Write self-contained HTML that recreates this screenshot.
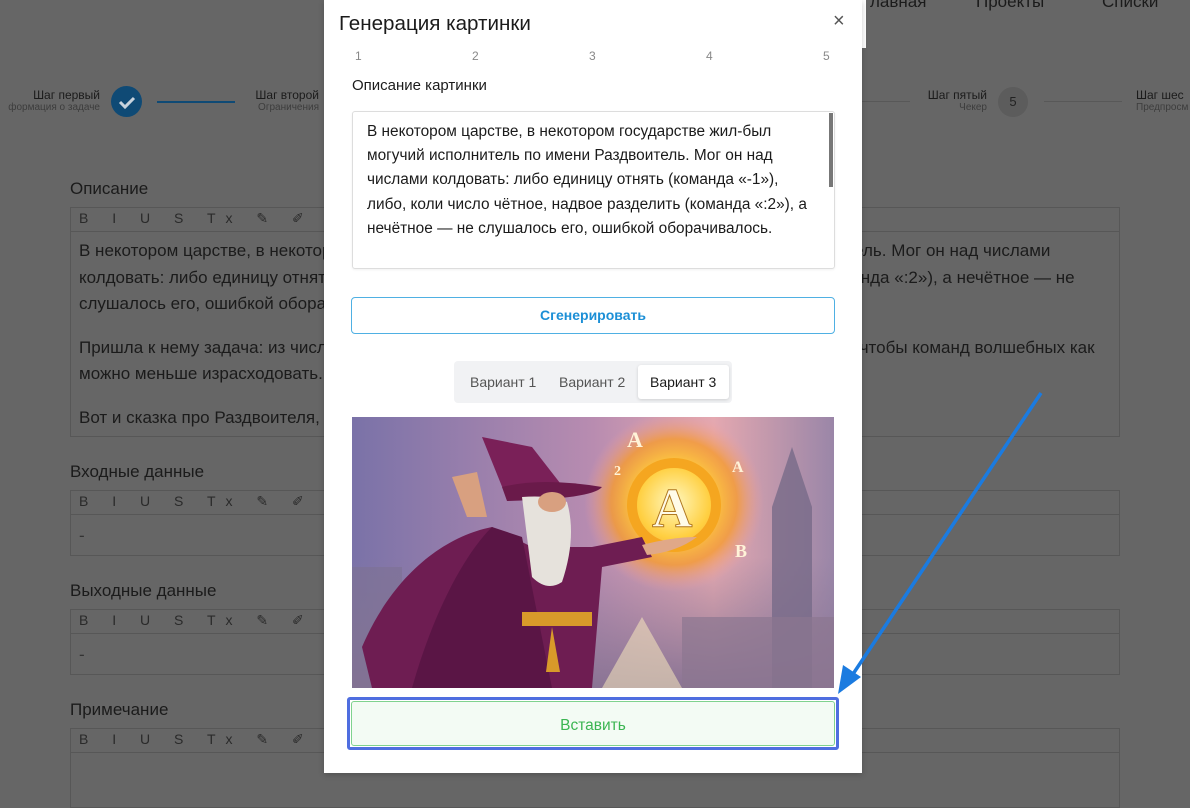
<!DOCTYPE html>
<html><head><meta charset="utf-8"><style>
*{box-sizing:border-box;margin:0;padding:0}
body{width:1190px;height:788px;overflow:hidden;background:#666;font-family:"Liberation Sans",sans-serif;position:relative;color:#1b1b1b}
.a{position:absolute;white-space:nowrap}
.ed{position:absolute;left:70px;width:1050px;border:1px solid #575757}
.tb{height:24px;border-bottom:1px solid #575757;font-size:14px;color:#2a2a2a;padding:2px 8px;letter-spacing:10px}
.bt{font-size:17px;color:#1b1b1b;line-height:26.5px;padding:4px 8px;white-space:nowrap;overflow:hidden}
.lbl{position:absolute;left:70px;font-size:17px;color:#1b1b1b}
.st{font-size:12px;color:#1b1b1b;text-align:right}
.st small{display:block;font-size:10px;color:#3d3d3d}
</style></head><body>
<div class="a" style="left:870px;top:-8px;font-size:17px">лавная</div>
<div class="a" style="left:976px;top:-8px;font-size:17px">Проекты</div>
<div class="a" style="left:1102px;top:-8px;font-size:17px">Списки</div>
<div class="a st" style="right:1090px;top:88px">Шаг первый<small>формация о задаче</small></div>
<div class="a" style="left:111px;top:86px;width:31px;height:31px;border-radius:50%;background:#0f4a75"><svg width="31" height="31"><path d="M9 16l5 5 9-9" stroke="#c8d3dd" stroke-width="3" fill="none"/></svg></div>
<div class="a" style="left:157px;top:101px;width:78px;height:2px;background:#0f4a75"></div>
<div class="a st" style="right:871px;top:88px">Шаг второй<small>Ограничения</small></div>
<div class="a" style="left:862px;top:101px;width:48px;height:1px;background:#585858"></div>
<div class="a st" style="right:203px;top:88px">Шаг пятый<small>Чекер</small></div>
<div class="a" style="left:998px;top:87px;width:30px;height:30px;border-radius:50%;background:#5c5c5c;color:#222;font-size:13px;text-align:center;line-height:30px">5</div>
<div class="a" style="left:1044px;top:101px;width:78px;height:1px;background:#585858"></div>
<div class="a st" style="left:1136px;top:88px;text-align:left">Шаг шес<small>Предпросм</small></div>
<div class="lbl" style="top:179px">Описание</div>
<div class="ed" style="top:207px;height:230px"><div class="tb">B I U S Tx ✎ ✐ ‹/› √x ▣</div>
<div class="bt" style="padding-top:6px">В некотором царстве, в некотором государстве жил-был могучий исполнитель по имени Раздвоитель. Мог он над числами<br>колдовать: либо единицу отнять (команда «-1»), либо, коли число чётное, надвое разделить (команда «:2»), а нечётное — не<br>слушалось его, ошибкой оборачивалось.<div style="height:17px"></div>Пришла к нему задача: из числа одного другое получить, без ошибок всяких, да не абы как, а так, чтобы команд волшебных как<br>можно меньше израсходовать.<div style="height:17px"></div>Вот и сказка про Раздвоителя, а</div></div>
<div class="lbl" style="top:462px">Входные данные</div>
<div class="ed" style="top:490px;height:66px"><div class="tb">B I U S Tx ✎ ✐ ‹/› √x ▣</div><div class="bt" style="color:#333;padding-top:8px">-</div></div>
<div class="lbl" style="top:581px">Выходные данные</div>
<div class="ed" style="top:609px;height:66px"><div class="tb">B I U S Tx ✎ ✐ ‹/› √x ▣</div><div class="bt" style="color:#333;padding-top:8px">-</div></div>
<div class="lbl" style="top:700px">Примечание</div>
<div class="ed" style="top:728px;height:80px"><div class="tb">B I U S Tx ✎ ✐ ‹/› √x ▣</div></div>
<div class="a" style="left:324px;top:0;width:542px;height:48px;background:#fff"></div>
<div class="a" style="left:324px;top:0;width:538px;height:773px;background:#fff;box-shadow:0 2px 6px rgba(0,0,0,.2)"></div>
<div class="a" style="left:339px;top:12px;font-size:20.6px;color:#1b1b1b">Генерация картинки</div>
<div class="a" style="left:833px;top:10px;font-size:20px;color:#555">×</div>
<div class="a" style="left:355px;top:49px;font-size:12px;color:#888">1</div>
<div class="a" style="left:472px;top:49px;font-size:12px;color:#888">2</div>
<div class="a" style="left:589px;top:49px;font-size:12px;color:#888">3</div>
<div class="a" style="left:706px;top:49px;font-size:12px;color:#888">4</div>
<div class="a" style="left:823px;top:49px;font-size:12px;color:#888">5</div>
<div class="a" style="left:352px;top:77px;font-size:15px;color:#1b1b1b">Описание картинки</div>
<div class="a" style="left:352px;top:111px;width:483px;height:158px;border:1px solid #ddd;border-radius:3px;box-shadow:0 1px 2px rgba(0,0,0,.06)"></div>
<div class="a" style="left:829px;top:113px;width:4px;height:74px;background:#777"></div>
<div class="a" style="left:367px;top:120px;font-size:15.4px;line-height:24.2px;color:#1b1b1b">В некотором царстве, в некотором государстве жил-был<br>могучий исполнитель по имени Раздвоитель. Мог он над<br>числами колдовать: либо единицу отнять (команда «-1»),<br>либо, коли число чётное, надвое разделить (команда «:2»), а<br>нечётное — не слушалось его, ошибкой оборачивалось.</div>
<div class="a" style="left:351px;top:297px;width:484px;height:37px;border:1px solid #4fb0e3;border-radius:4px;text-align:center;line-height:35px;font-size:14px;font-weight:bold;color:#1c8fd6">Сгенерировать</div>
<div class="a" style="left:454px;top:361px;width:278px;height:42px;background:#f1f2f4;border-radius:4px"></div>
<div class="a" style="left:470px;top:374px;font-size:14px;color:#555">Вариант 1</div>
<div class="a" style="left:559px;top:374px;font-size:14px;color:#555">Вариант 2</div>
<div class="a" style="left:638px;top:365px;width:91px;height:34px;background:#fff;border-radius:3px;box-shadow:0 1px 3px rgba(0,0,0,.15)"></div>
<div class="a" style="left:650px;top:374px;font-size:14px;color:#1b1b1b">Вариант 3</div>
<svg class="a" style="left:352px;top:417px" width="482" height="271" viewBox="0 0 482 271">
<defs>
<linearGradient id="sky" x1="0" y1="0" x2="1" y2="0"><stop offset="0" stop-color="#7a72a8"/><stop offset=".5" stop-color="#b88cb0"/><stop offset=".75" stop-color="#e4a8b0"/><stop offset="1" stop-color="#9a86a8"/></linearGradient>
<radialGradient id="glow" cx=".5" cy=".5" r=".5"><stop offset="0" stop-color="#fff8c0"/><stop offset=".4" stop-color="#ffcf40"/><stop offset=".7" stop-color="#f59b30" stop-opacity=".8"/><stop offset="1" stop-color="#f2a0a0" stop-opacity="0"/></radialGradient>
<linearGradient id="bot" x1="0" y1="0" x2="0" y2="1"><stop offset="0" stop-color="#8a7a9a" stop-opacity="0"/><stop offset="1" stop-color="#8a7494"/></linearGradient>
</defs>
<rect width="482" height="271" fill="url(#sky)"/>
<rect y="140" width="482" height="131" fill="url(#bot)"/>
<path d="M0 150h50v121H0z" fill="#7d7292" opacity=".6"/>
<path d="M420 90l20-60 20 60v181h-40z" fill="#776a88" opacity=".8"/>
<path d="M330 200h152v71H330z" fill="#8c7690" opacity=".7"/>
<path d="M290 200l40 71h-80z" fill="#fff2c0" opacity=".5"/>
<circle cx="322" cy="85" r="90" fill="url(#glow)"/>
<circle cx="322" cy="88" r="42" fill="none" stroke="#f5a620" stroke-width="10"/>
<text x="300" y="110" font-family="Liberation Serif" font-size="56" font-weight="bold" fill="#fffbe8" stroke="#b07820" stroke-width="1">A</text>
<text x="275" y="30" font-family="Liberation Serif" font-size="22" font-weight="bold" fill="#fff3d8">A</text>
<text x="380" y="55" font-family="Liberation Serif" font-size="16" font-weight="bold" fill="#fff3d8">A</text>
<text x="383" y="140" font-family="Liberation Serif" font-size="18" font-weight="bold" fill="#fff3d8">B</text>
<text x="262" y="58" font-family="Liberation Serif" font-size="14" font-weight="bold" fill="#fff3d8">2</text>
<path d="M10 230C40 160 90 120 140 110L180 130 240 130 290 120 300 140 250 150 240 271H20z" fill="#6e1d52"/>
<path d="M140 110L170 120 200 271H60C80 200 110 140 140 110z" fill="#5a1545"/>
<path d="M130 20L180 30 215 75 155 82z" fill="#7a2058"/>
<path d="M150 70Q190 60 250 70 240 82 155 84z" fill="#6a1a4a"/>
<path d="M170 80Q200 78 215 85 225 120 210 165 195 175 180 160 170 120z" fill="#e6e2dc"/>
<ellipse cx="200" cy="85" rx="14" ry="10" fill="#d8a080"/>
<path d="M170 195h70v14h-70z" fill="#d89a2a"/>
<path d="M200 210l-6 45h14z" fill="#d89a2a"/>
<path d="M100 60l15 40 20 0-10-45z" fill="#d8a080"/>
<path d="M290 128q30-8 55-8-20 15-50 18z" fill="#e0a888"/>
</svg>
<div class="a" style="left:347px;top:697px;width:492px;height:53px;border:3px solid #4f6ee0;border-radius:3px"></div>
<div class="a" style="left:351px;top:701px;width:484px;height:45px;border:1px solid #7fd28e;border-radius:3px;background:#f3fbf4;text-align:center;line-height:48px;font-size:15.5px;color:#3bb552">Вставить</div>
<svg class="a" style="left:0;top:0" width="1190" height="788"><path d="M1041 393L849 680" stroke="#1b7be0" stroke-width="3.5" fill="none"/><path d="M838 694L843 665 861 677z" fill="#1b7be0"/></svg>
</body></html>
